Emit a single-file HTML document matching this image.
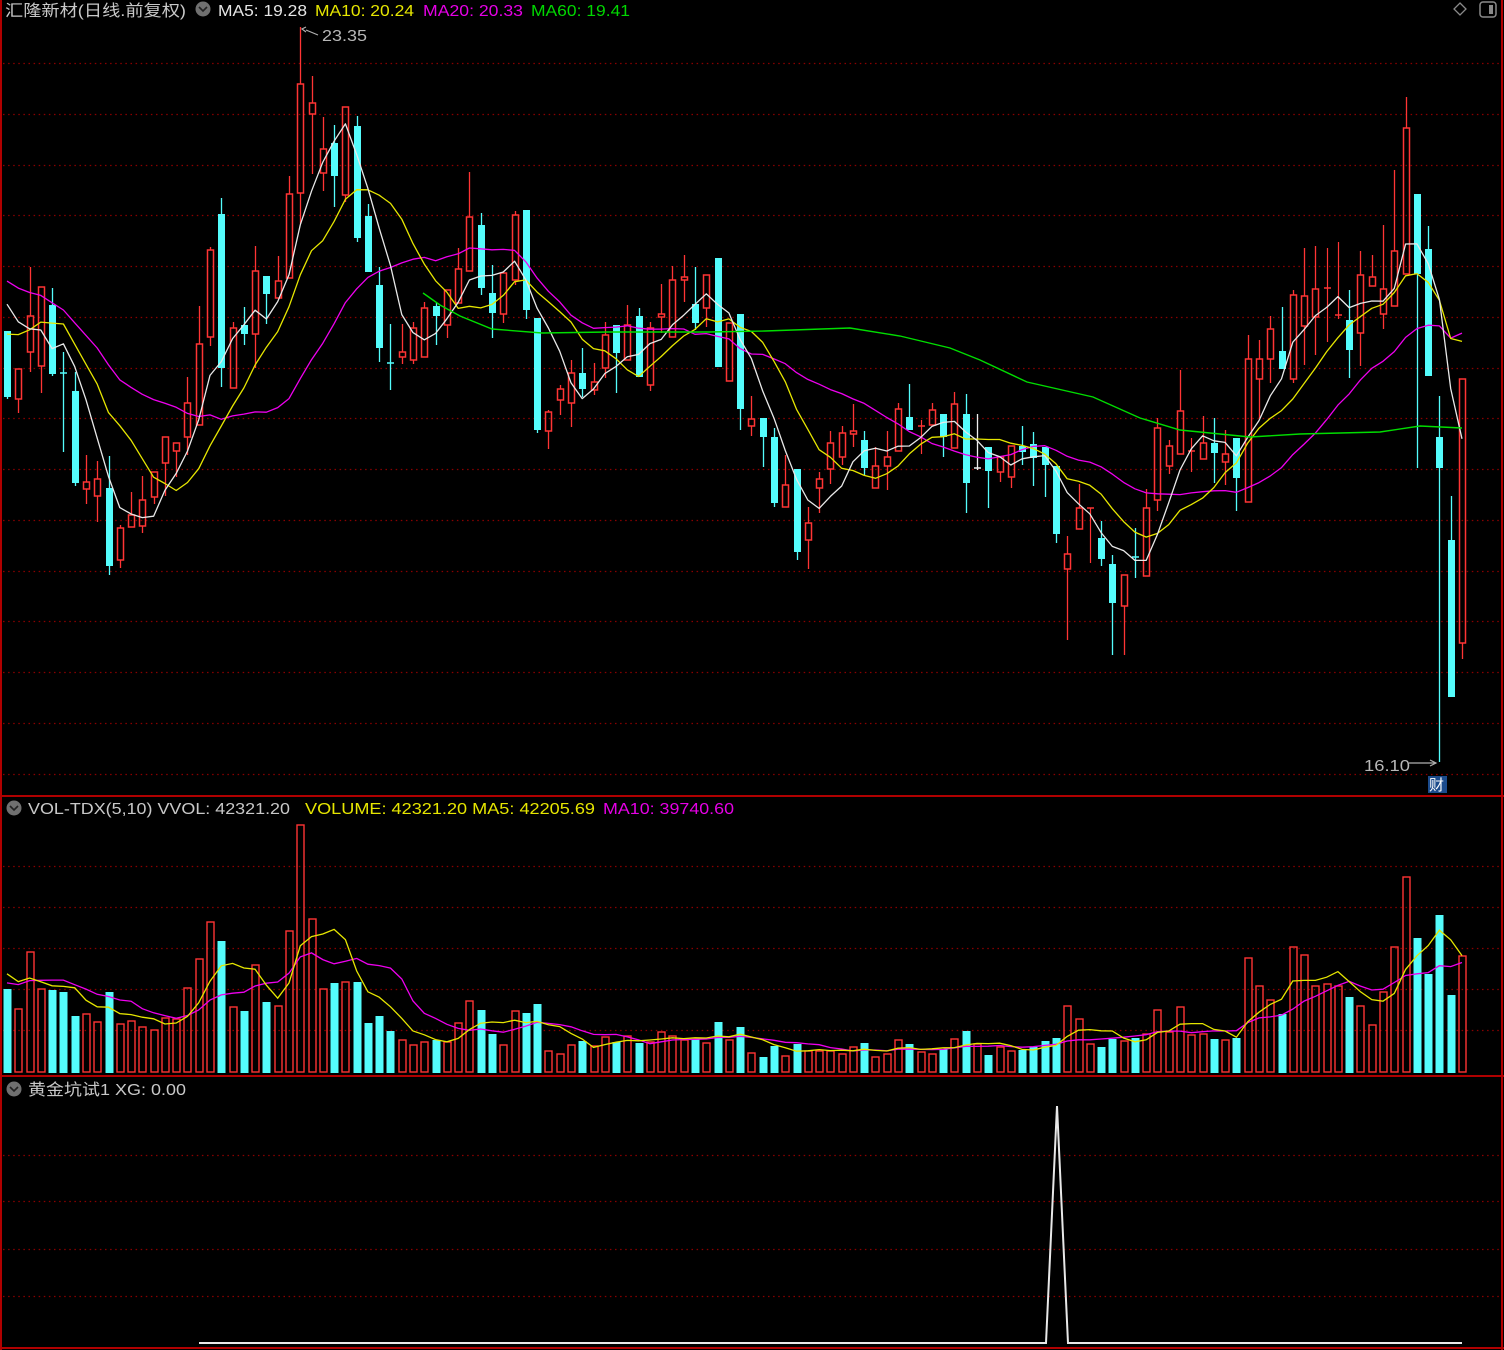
<!DOCTYPE html>
<html><head><meta charset="utf-8"><style>
html,body{margin:0;padding:0;background:#000;}
svg{display:block;}
text{font-family:"Liberation Sans","Noto Sans CJK SC",sans-serif;font-size:16px;}
</style></head><body>
<svg id="s" width="1504" height="1350" viewBox="0 0 1504 1350" xmlns="http://www.w3.org/2000/svg">
<rect width="1504" height="1350" fill="#000"/>
<g id="grid"></g>
<g id="vol"></g>
<g id="cand"></g>
<g id="ma"></g>
<!-- borders -->
<rect x="0" y="0" width="2" height="1350" fill="#b00000"/>
<rect x="1501" y="0" width="2" height="1350" fill="#b00000"/>
<rect x="0" y="795" width="1504" height="2" fill="#b00000"/>
<rect x="0" y="1075" width="1504" height="2" fill="#b00000"/>
<rect x="0" y="1347" width="1504" height="2" fill="#b00000"/>
<!-- bottom indicator -->
<polyline points="199,1343 1046,1343 1057,1106 1068,1343 1462,1343" fill="none" stroke="#e8e8e8" stroke-width="2"/>
<!-- headers -->
<text x="5" y="16" fill="#c8c8c8" textLength="181" lengthAdjust="spacingAndGlyphs">汇隆新材(日线.前复权)</text>
<circle cx="203" cy="9" r="7.5" fill="#707070"/><polyline points="199,7 203,11 207,7" fill="none" stroke="#222" stroke-width="1.6"/>
<text x="218" y="16" fill="#e6e6e6" textLength="89" lengthAdjust="spacingAndGlyphs">MA5: 19.28</text>
<text x="315" y="16" fill="#e6e600" textLength="99" lengthAdjust="spacingAndGlyphs">MA10: 20.24</text>
<text x="423" y="16" fill="#e600e6" textLength="100" lengthAdjust="spacingAndGlyphs">MA20: 20.33</text>
<text x="531" y="16" fill="#00d800" textLength="99" lengthAdjust="spacingAndGlyphs">MA60: 19.41</text>
<polygon points="1460,3 1466,9 1460,15 1454,9" fill="none" stroke="#8a8a8a" stroke-width="1.3"/>
<rect x="1480" y="2" width="16" height="15" rx="3" fill="none" stroke="#8a8a8a" stroke-width="1.5"/><rect x="1489" y="5" width="4" height="9" fill="#8a8a8a"/>
<circle cx="14" cy="808" r="7.5" fill="#707070"/><polyline points="10,806 14,810 18,806" fill="none" stroke="#222" stroke-width="1.6"/>
<text x="28" y="814" fill="#c8c8c8" textLength="262" lengthAdjust="spacingAndGlyphs">VOL-TDX(5,10) VVOL: 42321.20</text>
<text x="305" y="814" fill="#e6e600" textLength="290" lengthAdjust="spacingAndGlyphs">VOLUME: 42321.20 MA5: 42205.69</text>
<text x="603" y="814" fill="#e600e6" textLength="131" lengthAdjust="spacingAndGlyphs">MA10: 39740.60</text>
<circle cx="14" cy="1089" r="7.5" fill="#707070"/><polyline points="10,1087 14,1091 18,1087" fill="none" stroke="#222" stroke-width="1.6"/>
<text x="28" y="1095" fill="#c8c8c8" textLength="158" lengthAdjust="spacingAndGlyphs">黄金坑试1 XG: 0.00</text>
<!-- annotations -->
<polyline points="318,35 306,30" fill="none" stroke="#b0b0b0" stroke-width="1.2"/><polyline points="306,27 302,29 306,32" fill="none" stroke="#b0b0b0" stroke-width="1.2"/>
<text x="322" y="41" fill="#b8b8b8" textLength="45" lengthAdjust="spacingAndGlyphs">23.35</text>
<text x="1364" y="771" fill="#b8b8b8" textLength="46" lengthAdjust="spacingAndGlyphs">16.10</text>
<line x1="1409" y1="763" x2="1436" y2="763" stroke="#b0b0b0" stroke-width="1.2"/><polyline points="1430,760 1436,763 1430,766" fill="none" stroke="#b0b0b0" stroke-width="1.2"/>
<rect x="1428" y="776" width="19" height="17" fill="#1b4b8c"/>
<text x="1429" y="790" fill="#fff" font-size="15" style="font-size:15px">财</text>
</svg>
<script>
(function(){
var NS="http://www.w3.org/2000/svg";
function el(p,t,a){var e=document.createElementNS(NS,t);for(var k in a)e.setAttribute(k,a[k]);p.appendChild(e);return e;}
var grid=document.getElementById('grid');
var gy=[];for(var k=0;k<15;k++)gy.push(63+50.75*k);
gy=gy.concat([866,907,948,989,1030,1155,1201,1249,1296]);
gy.forEach(function(y){el(grid,'line',{x1:3,x2:1500,y1:Math.round(y)+0.5,y2:Math.round(y)+0.5,stroke:'#8a0000','stroke-width':1.3,'stroke-dasharray':'1.5,3.6'});});
var D=[
"c 331 397 331 399","r 369 399 369 413","r 316 352 267 372","r 287 366 287 393","c 305 374 288 376","c 373 373 352 452","c 391 483 372 486","r 482 489 455 504","r 479 496 461 522","c 488 566 456 575",
"r 528 560 525 568","r 515 527 492 527","r 500 526 476 533","r 472 497 472 504","r 437 463 437 496","r 443 451 443 477","r 403 437 377 455","r 344 425 306 425","r 250 337 247 346","c 214 368 198 387",
"r 328 388 322 388","c 325 334 307 345","r 271 334 246 368","c 276 294 276 324","r 281 298 256 298","r 194 278 176 278","r 84 193 27 224","r 103 114 76 174","r 149 173 117 191","c 143 176 125 207",
"r 107 195 107 202","c 126 238 116 242","c 216 272 204 272","c 285 348 267 362","c 363 363 324 390","r 352 357 324 364","r 328 360 322 364","r 308 357 302 357","c 306 316 303 345","r 290 325 290 338",
"r 269 303 248 303","r 217 271 172 271","c 225 288 213 295","c 293 313 265 338","r 273 314 273 323","r 215 280 211 285","c 210 310 210 319","c 318 430 318 433","r 412 431 410 449","r 389 400 385 415",
"r 373 403 360 427","c 373 389 348 397","r 382 390 363 395","r 335 368 322 378","c 325 353 325 393","r 325 360 305 360","c 316 377 308 377","r 328 385 322 391","r 314 317 284 333","r 280 337 266 337",
"r 277 280 255 302","c 304 323 267 330","r 275 308 275 327","c 258 367 258 367","r 323 381 323 381","c 314 409 314 430","r 419 426 396 436","c 418 437 418 467","c 437 503 428 507","r 485 507 455 507",
"c 469 552 469 560","r 523 540 507 569","r 479 488 472 513","r 443 469 431 484","r 433 457 426 465","r 431 434 404 447","c 440 468 431 475","r 466 488 447 488","r 457 466 431 490","r 409 451 403 451",
"c 417 430 384 430","r 426 426 420 454","r 410 425 403 425","c 414 437 414 457","r 404 448 392 448","c 414 483 394 513","w 468 468 414 470","c 447 471 447 508","r 457 472 457 482","r 446 477 446 488",
"c 446 452 426 465","c 444 458 432 486","c 447 465 447 497","c 466 534 466 543","r 554 569 536 640","r 508 529 484 529","r 508 508 508 563","c 538 559 521 566","c 564 603 555 655","r 575 606 575 655",
"c 557 557 528 578","r 508 576 489 576","r 428 500 418 511","r 446 466 440 474","r 411 454 370 454","r 451 451 438 472","r 443 459 416 459","c 443 453 418 483","r 454 462 430 485","c 438 478 438 511",
"r 359 502 335 502","r 359 379 340 418","r 329 359 316 383","c 351 369 307 369","r 295 379 290 383","r 296 326 248 365","r 289 317 246 355","r 288 288 248 342","r 315 315 242 319","c 320 350 290 378",
"r 275 333 251 366","r 277 286 255 286","r 289 314 225 329","r 251 306 170 306","r 128 274 97 274","c 194 274 194 468","c 249 376 226 376","c 437 468 396 762","c 540 697 496 697","r 379 643 379 659"];
var V=[989,1009,952,989,990,992,1016,1014,1022,992,1024,1021,1027,1030,1018,1019,988,959,922,941,1007,1011,965,1002,1006,931,825,919,989,983,982,982,1023,1016,1031,1040,1045,1042,1040,1042,1023,1001,1010,1034,1045,1011,1013,1004,1051,1054,1045,1041,1046,1037,1042,1036,1043,1042,1032,1036,1040,1039,1043,1022,1040,1027,1053,1057,1046,1056,1044,1051,1051,1051,1054,1047,1043,1057,1054,1040,1044,1052,1054,1049,1039,1031,1044,1055,1047,1051,1050,1047,1041,1038,1006,1019,1044,1047,1039,1041,1038,1034,1010,1032,1007,1035,1034,1039,1040,1038,958,986,1000,1014,947,955,986,984,986,997,1006,1025,992,947,877,938,974,915,995,956];
var RED='#ff3434',CY='#54fcfc';
var cg=document.getElementById('cand'),vg=document.getElementById('vol'),mg=document.getElementById('ma');
var closes=[];var N=D.length;
function X(i){return 7+i*(1455/129);}
for(var i=0;i<N;i++){
 var p=D[i].split(' ');var t=p[0],bt=+p[1],bb=+p[2],hi=+p[3],lo=+p[4];var x=Math.round(X(i))+0.5;
 if(t=='r'){
  if(bb-bt<1.5){el(cg,'line',{x1:x-3.5,x2:x+3.5,y1:bt,y2:bt,stroke:RED,'stroke-width':1.5});el(cg,'line',{x1:x,x2:x,y1:hi,y2:lo,stroke:RED,'stroke-width':1.2});}
  else{el(cg,'rect',{x:x-3,y:bt,width:6,height:bb-bt,fill:'none',stroke:RED,'stroke-width':1.5});
  if(hi<bt)el(cg,'line',{x1:x,x2:x,y1:hi,y2:bt,stroke:RED,'stroke-width':1.3});
  if(lo>bb)el(cg,'line',{x1:x,x2:x,y1:bb,y2:lo,stroke:RED,'stroke-width':1.3});}
  closes.push(bt);
 }else if(t=='c'){
  el(cg,'line',{x1:x,x2:x,y1:hi,y2:lo,stroke:CY,'stroke-width':1.3});
  if(bb-bt<1.5)el(cg,'line',{x1:x-3.5,x2:x+3.5,y1:bt,y2:bt,stroke:CY,'stroke-width':1.5});
  else el(cg,'rect',{x:x-3.5,y:bt,width:7,height:bb-bt,fill:CY});
  closes.push(bb);
 }else{
  el(cg,'line',{x1:x,x2:x,y1:hi,y2:lo,stroke:'#eee','stroke-width':1.3});
  el(cg,'line',{x1:x-3.5,x2:x+3.5,y1:bt,y2:bt,stroke:'#eee','stroke-width':1.5});
  closes.push(bt);
 }
 var vt=V[i]!==undefined?V[i]:1050;var col=(t=='c')?CY:RED;
 if(t=='c')el(vg,'rect',{x:x-4,y:vt,width:8,height:1073-vt,fill:CY});
 else el(vg,'rect',{x:x-3.5,y:vt,width:7,height:1072-vt,fill:'none',stroke:RED,'stroke-width':1.4});
}
var pad=[];for(k=0;k<10;k++)pad.push(228);for(k=0;k<5;k++)pad.push(364);for(k=0;k<4;k++)pad.push(281);
var all=pad.concat(closes);var off=pad.length;
function ma(arr,off,n,color,w){var pts=[];for(var i=0;i<N;i++){var s=0;for(var j=0;j<n;j++)s+=arr[off+i-j];pts.push(X(i).toFixed(1)+','+(s/n).toFixed(1));}
 el(mg,'polyline',{points:pts.join(' '),fill:'none',stroke:color,'stroke-width':w||1.3,'stroke-linejoin':'round'});}
ma(all,off,20,'#ee00ee');ma(all,off,10,'#e6e600');ma(all,off,5,'#e8e8e8');
el(mg,'polyline',{points:"423,293 440,305 460,316 492,329 542,333 608,332 708,332 765,331 850,328 900,336 950,348 980,360 1027,382 1093,397 1140,418 1180,430 1250,437 1300,434 1380,432 1420,426 1462,428",fill:'none',stroke:'#00dd00','stroke-width':1.4});
var vp=[992,992,992,992,992,970,970,970,970];var va=vp.concat(V.slice(0,N));while(va.length<N+9)va.push(1050);
function vma(n,color){var pts=[];for(var i=0;i<N;i++){var s=0;for(var j=0;j<n;j++)s+=va[9+i-j];pts.push(X(i).toFixed(1)+','+(s/n).toFixed(1));}
 el(vg,'polyline',{points:pts.join(' '),fill:'none',stroke:color,'stroke-width':1.3});}
vma(10,'#ee00ee');vma(5,'#e6e600');
})();
</script>
</body></html>
